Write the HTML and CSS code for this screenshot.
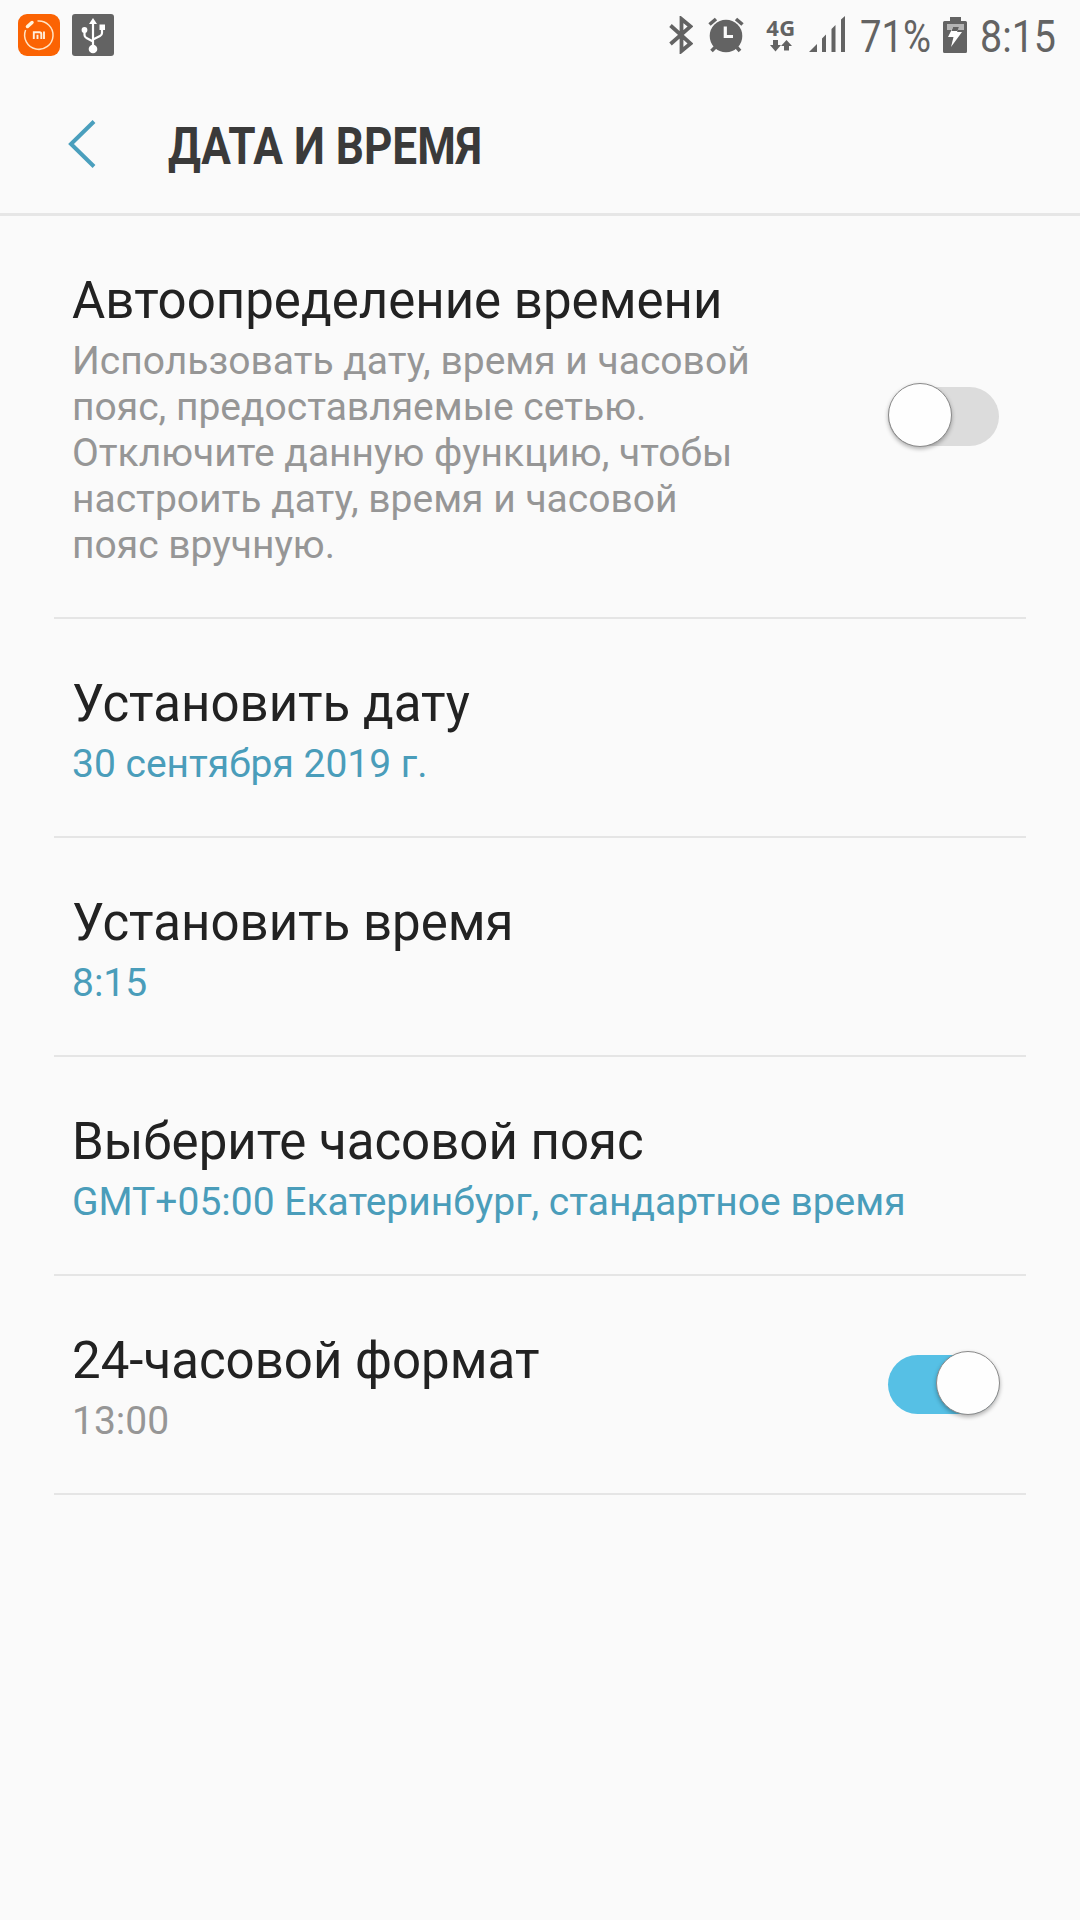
FILE: index.html
```html
<!DOCTYPE html>
<html lang="ru">
<head>
    <meta charset="UTF-8">
    <meta name="viewport" content="width=device-width, initial-scale=1.0">
    <title>Дата и время</title>
    <link rel="stylesheet" href="styles.css">
</head>
<body>
    <div class="status-bar">
        <div class="notifications">
            <svg class="icon-mi" width="42" height="42" viewBox="0 0 42 42">
                <rect width="42" height="42" rx="9" fill="#fb6303"/>
                <path d="M19.500 7A14.200 14.200 0 1 1 7.600 16" fill="none" stroke="#ffe3c4" stroke-width="1.500"/>
                <path d="M9.500 12.500L14 8.500" stroke="#fff3dc" stroke-width="3.500" stroke-linecap="round"/>
                <path d="M15.800 25V18.200H21.500Q23.300 18.200 23.300 20V25M19.500 20.800V25M26 17.500V25" fill="none" stroke="#ffeedd" stroke-width="1.900"/>
            </svg>
            <svg class="icon-usb" width="42" height="42" viewBox="0 0 42 42">
                <rect width="42" height="42" rx="3" fill="#636363"/>
                <path d="M21 34V9M12.500 16V21Q12.500 23 14.500 24L21 27.500M30 14V19Q30 21 28 22L21 25.500" fill="none" stroke="#fff" stroke-width="2.200"/>
                <path d="M21 4L25 10H17Z" fill="#fff"/>
                <rect x="27.500" y="10.500" width="5.500" height="5.500" fill="#fff"/>
                <circle cx="12.500" cy="16" r="2.900" fill="#fff"/>
                <circle cx="21" cy="35" r="4.300" fill="#fff"/>
            </svg>
        </div>
        <div class="indicators">
            <svg class="icon-bluetooth" width="24" height="38" viewBox="0 0 24 38">
                <path d="M1.500 9.500L21.500 27.500L12.500 35V3L21.500 10.500L1.500 28" fill="none" stroke="#636363" stroke-width="3.800"/>
            </svg>
            <svg class="icon-alarm" width="36" height="36" viewBox="0 0 36 36">
                <circle cx="18" cy="19" r="16.300" fill="#636363"/>
                <path d="M1.500 7.500L8 2M28 2L34.500 7.500M7.500 30L3.500 34M28.500 30L32 34" stroke="#636363" stroke-width="3.600"/>
                <path d="M17.300 9.500V19.500H25" fill="none" stroke="#fafafa" stroke-width="3.200"/>
            </svg>
            <div class="network">
                <span class="network-type">4G</span>
                <svg width="22" height="12" viewBox="0 0 22 12">
                    <path d="M3 0H8V5H11L5.500 11.500L0 5H3ZM14 10.500H19V6H22L16.500 0L11 6H14Z" fill="#636363"/>
                </svg>
            </div>
            <svg class="icon-signal" width="36" height="36" viewBox="0 0 36 36">
                <path d="M0 36L8 28V36ZM13 36V22.500L17 18.500V36ZM22.500 36V13L26.500 9V36ZM32 36V3.500L36 0V36Z" fill="#636363"/>
            </svg>
            <svg class="status-text battery-level" width="71" height="40">
                <text x="0" y="36" textLength="71" lengthAdjust="spacingAndGlyphs">71%</text>
            </svg>
            <svg class="icon-battery" width="24" height="36" viewBox="0 0 24 36">
                <path d="M7 0H18V4H22.500Q24 4 24 5.500V34.500Q24 36 22.500 36H1.500Q0 36 0 34.500V5.500Q0 4 1.500 4H7Z" fill="#636363"/>
                <path d="M4 7H21V13H4Z" fill="#b5b5b5"/>
                <path d="M10 10H16L14 15H19L8 30L10.500 20H5Z" fill="#fff"/>
                <path d="M10 10H16L14.500 14H8.500Z" fill="#636363"/>
            </svg>
            <svg class="status-text clock" width="75" height="40">
                <text x="-1" y="36" textLength="76" lengthAdjust="spacingAndGlyphs">8:15</text>
            </svg>
        </div>
    </div>

    <header class="header">
        <svg class="back" width="28" height="48" viewBox="0 0 28 48">
            <path d="M26 1.500L3 24L26 46.500" fill="none" stroke="#4a9fbd" stroke-width="4"/>
        </svg>
        <h1 class="title">
            <svg width="340" height="69">
                <text x="0" y="51" textLength="314" lengthAdjust="spacingAndGlyphs">ДАТА И ВРЕМЯ</text>
            </svg>
        </h1>
    </header>

    <main class="settings">
        <div class="row">
            <div class="row-text">
                <div class="row-title">Автоопределение времени</div>
                <div class="row-summary">Использовать дату, время и часовой<br>пояс, предоставляемые сетью.<br>Отключите данную функцию, чтобы<br>настроить дату, время и часовой<br>пояс вручную.</div>
            </div>
            <div class="switch"><div class="thumb"></div></div>
        </div>
        <div class="row">
            <div class="row-text">
                <div class="row-title">Установить дату</div>
                <div class="row-summary value">30 сентября 2019 г.</div>
            </div>
        </div>
        <div class="row">
            <div class="row-text">
                <div class="row-title">Установить время</div>
                <div class="row-summary value">8:15</div>
            </div>
        </div>
        <div class="row">
            <div class="row-text">
                <div class="row-title">Выберите часовой пояс</div>
                <div class="row-summary value">GMT+05:00 Екатеринбург, стандартное время</div>
            </div>
        </div>
        <div class="row">
            <div class="row-text">
                <div class="row-title">24-часовой формат</div>
                <div class="row-summary">13:00</div>
            </div>
            <div class="switch on"><div class="thumb"></div></div>
        </div>
    </main>
</body>
</html>
```
FILE: styles.css
```css
* {
    box-sizing: border-box;
}
body {
    margin: 0;
    min-height: 1920px;
    background: #fafafa;
    color: #222;
    font-family: Roboto, sans-serif;
}
svg {
    display: block;
    flex-shrink: 0;
}

/* Status bar */
.status-bar {
    display: flex;
    justify-content: space-between;
    height: 72px;
    padding: 14px 24px 0 18px;
}
.notifications {
    display: flex;
    gap: 12px;
}
.indicators {
    display: flex;
    align-items: flex-start;
    padding-top: 2px;
}
.icon-alarm {
    margin: 1px 0 0 15px;
}
.network {
    display: flex;
    flex-direction: column;
    align-items: center;
    width: 28px;
    margin-left: 23px;
}
.network-type {
    height: 24px;
    font: bold 22px/22px "Open Sans", sans-serif;
    letter-spacing: 0.5px;
    color: #636363;
}
.icon-signal {
    margin-left: 14px;
}
.status-text {
    fill: #636363;
    font-size: 45px;
    overflow: visible;
}
.battery-level {
    margin-left: 15px;
}
.icon-battery {
    margin: 1px 0 0 12px;
}
.clock {
    margin-left: 14px;
}

/* Title bar */
.header {
    display: flex;
    align-items: center;
    height: 144px;
    padding-left: 68px;
    border-bottom: 3px solid #e6e6e6;
}
.back {
    margin-top: 2px;
}
.title {
    margin: 9px 0 0 72px;
    font-size: 51px;
    font-weight: bold;
    fill: #3a3a3a;
}
.title svg {
    overflow: visible;
}

/* Settings list */
.settings {
    padding: 0 54px;
}
.row {
    display: flex;
    align-items: center;
    justify-content: space-between;
    padding: 56px 27px 49px 18px;
    border-bottom: 2px solid #e5e5e5;
}
.row-title {
    margin-bottom: 9px;
    font-size: 51px;
    line-height: 57px;
    white-space: nowrap;
}
.row-summary {
    color: #969696;
    font-size: 39px;
    line-height: 46px;
    white-space: nowrap;
}
.row-summary.value {
    color: #4a9dba;
}

/* Switch */
.switch {
    display: flex;
    align-items: center;
    flex-shrink: 0;
    width: 111px;
    height: 59px;
    margin-top: -7px;
    border-radius: 30px;
    background: #dcdcdc;
}
.switch.on {
    justify-content: flex-end;
    background: #56c0e5;
}
.thumb {
    flex-shrink: 0;
    width: 64px;
    height: 64px;
    margin-top: -3px;
    border: 1px solid #8a8a8a;
    border-radius: 50%;
    background: #fefefe;
    box-shadow: 0 2px 4px rgba(0, 0, 0, 0.3);
}
.switch.on .thumb {
    margin-right: -1px;
}
```
